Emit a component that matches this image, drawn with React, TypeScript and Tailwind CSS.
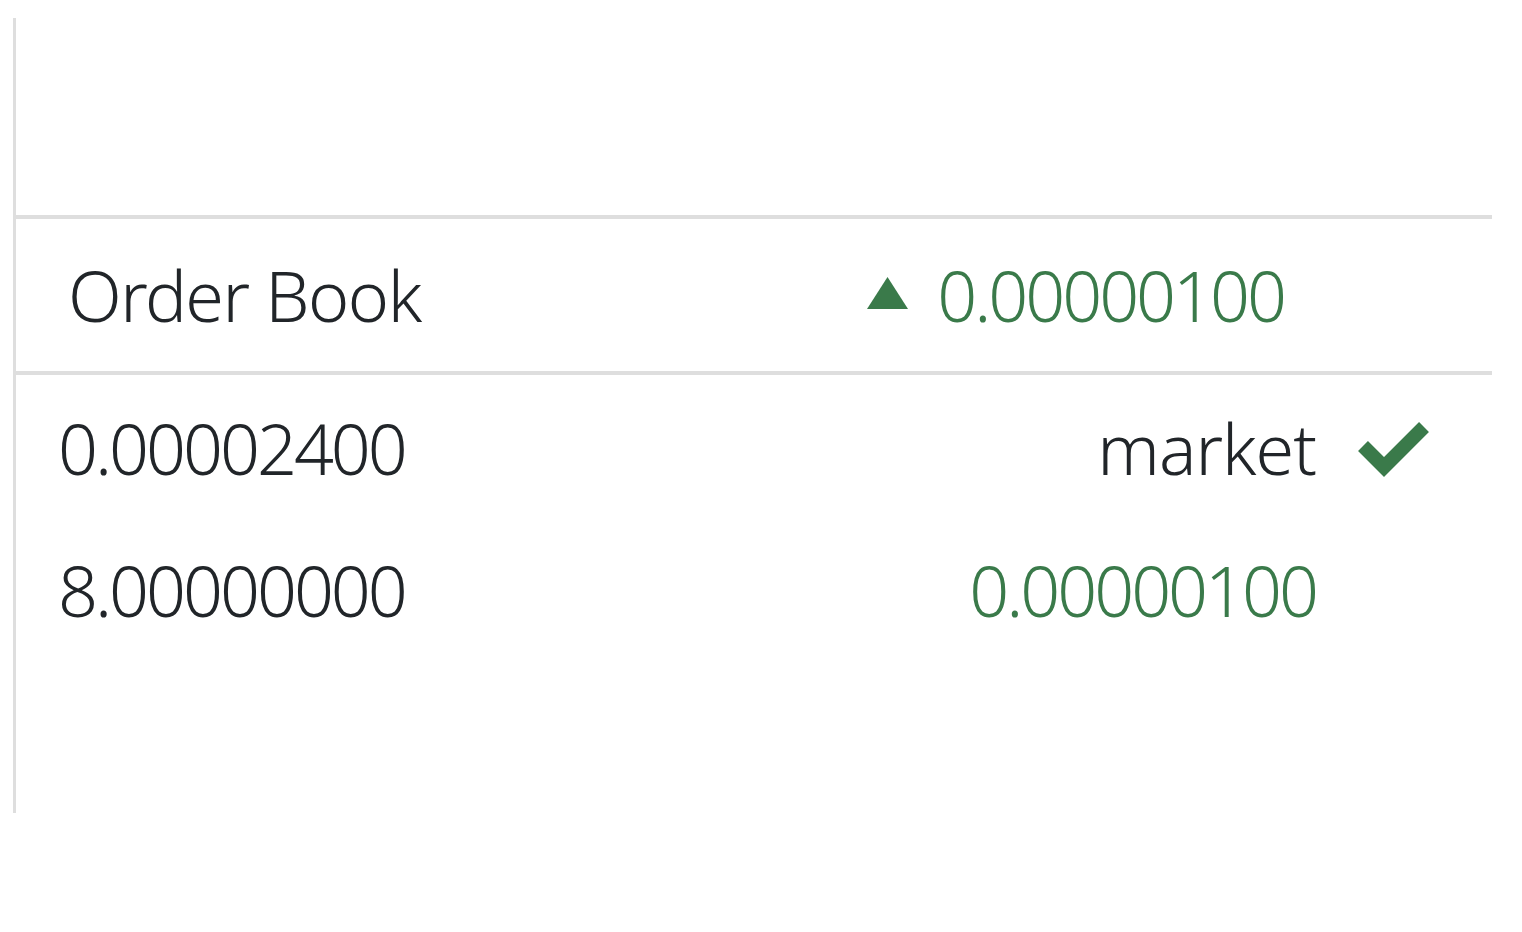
export default function App() {
  // order book rows: left amount, right value, tick shown
  const rows = [
    { left: '0.00002400', right: 'market', green: false, checked: true },
    { left: '8.00000000', right: '0.00000100', green: true, checked: false },
  ];

  return (
    <div className="min-h-screen bg-white pt-[18px] pl-[13px] text-[#212529] font-['Noto_Sans',sans-serif] font-[350]">
      <div className="w-[1479px] h-[795px] border-l-[3px] border-[#dedede] flex flex-col">
        {/* empty top area */}
        <div className="h-[197px]" />

        {/* Header */}
        <div className="h-[160px] border-y-[4px] border-[#dedede] flex items-center justify-between pl-[52px] pr-[208px]">
          <span className="text-[70px] leading-none tracking-[-1.5px]">Order Book</span>
          <div className="flex items-center gap-[29px] text-[#3a7a4a]">
            <svg width="41" height="32" viewBox="0 0 41 32" className="mt-[-4px]">
              <polygon points="20.5,0 41,32 0,32" fill="#3a7a4a" />
            </svg>
            <span className="text-[70px] leading-none tracking-[-3px]">0.00000100</span>
          </div>
        </div>

        {/* Rows */}
        <div className="pt-[2px]">
          {rows.map((row, i) => (
            <div key={i} className="h-[142px] flex items-center justify-between pl-[42px] pr-[60px]">
              <span className="text-[70px] leading-none tracking-[-3px]">{row.left}</span>
              <div className="flex items-center">
                <span
                  className={`text-[70px] leading-none ${row.green ? 'text-[#3a7a4a] tracking-[-3px]' : 'tracking-[-1px]'}`}
                >
                  {row.right}
                </span>
                <div className="w-[76px] h-[60px] ml-[40px]">
                  {row.checked && (
                    <svg width="76" height="60" viewBox="0 0 76 60">
                      <polyline
                        points="7,28 28,49 68,9"
                        fill="none"
                        stroke="#3a7a4a"
                        strokeWidth="14"
                        strokeLinecap="butt"
                        strokeLinejoin="miter"
                      />
                    </svg>
                  )}
                </div>
              </div>
            </div>
          ))}
        </div>
      </div>
    </div>
  );
}
